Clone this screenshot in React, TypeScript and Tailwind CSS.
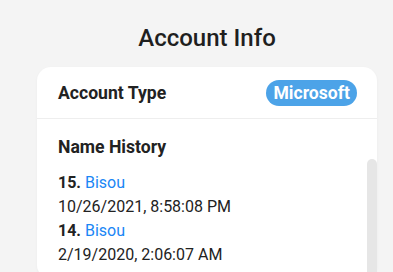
const history = [
  { n: 15, name: 'Bisou', date: '10/26/2021, 8:58:08 PM' },
  { n: 14, name: 'Bisou', date: '2/19/2020, 2:06:07 AM' },
];

export default function App() {
  return (
    <div className="min-h-screen bg-[#f4f4f4] font-['Roboto',sans-serif] text-[#222]">
      <div className="ml-[37px] w-[340px] pt-[22px]">
        <h1 className="text-center text-[24px] font-medium leading-[32px] text-[#1f1f1f]">Account Info</h1>

        <div className="mt-[13px] rounded-[14px] bg-white shadow-[0_1px_3px_rgba(0,0,0,0.04)]">
          <div className="flex items-center justify-between border-b border-[#eeeeee] pl-[21px] pr-[20px] py-[12px] pt-[13px]">
            <span className="text-[17.6px] font-bold">Account Type</span>
            <span className="rounded-full bg-[#4ca3e8] px-[7px] text-[17.6px] font-bold leading-[26px] text-white">
              Microsoft
            </span>
          </div>

          <div className="pl-[21px] pt-[16px]">
            <h2 className="text-[17.6px] font-bold leading-[24px]">Name History</h2>
            <div className="flex">
              <div className="flex-1 pt-[12px]">
                {history.map((h) => (
                  <div key={h.n} className="text-[16px] leading-[24px]">
                    <div>
                      <span className="font-bold">{h.n}.</span>{' '}
                      <span className="text-[#1a86f5]">{h.name}</span>
                    </div>
                    <div>{h.date}</div>
                  </div>
                ))}
              </div>
              <div className="w-[10px] h-[120px] rounded-t-full bg-[#e6e6e6]"></div>
            </div>
          </div>
        </div>
      </div>
    </div>
  );
}
